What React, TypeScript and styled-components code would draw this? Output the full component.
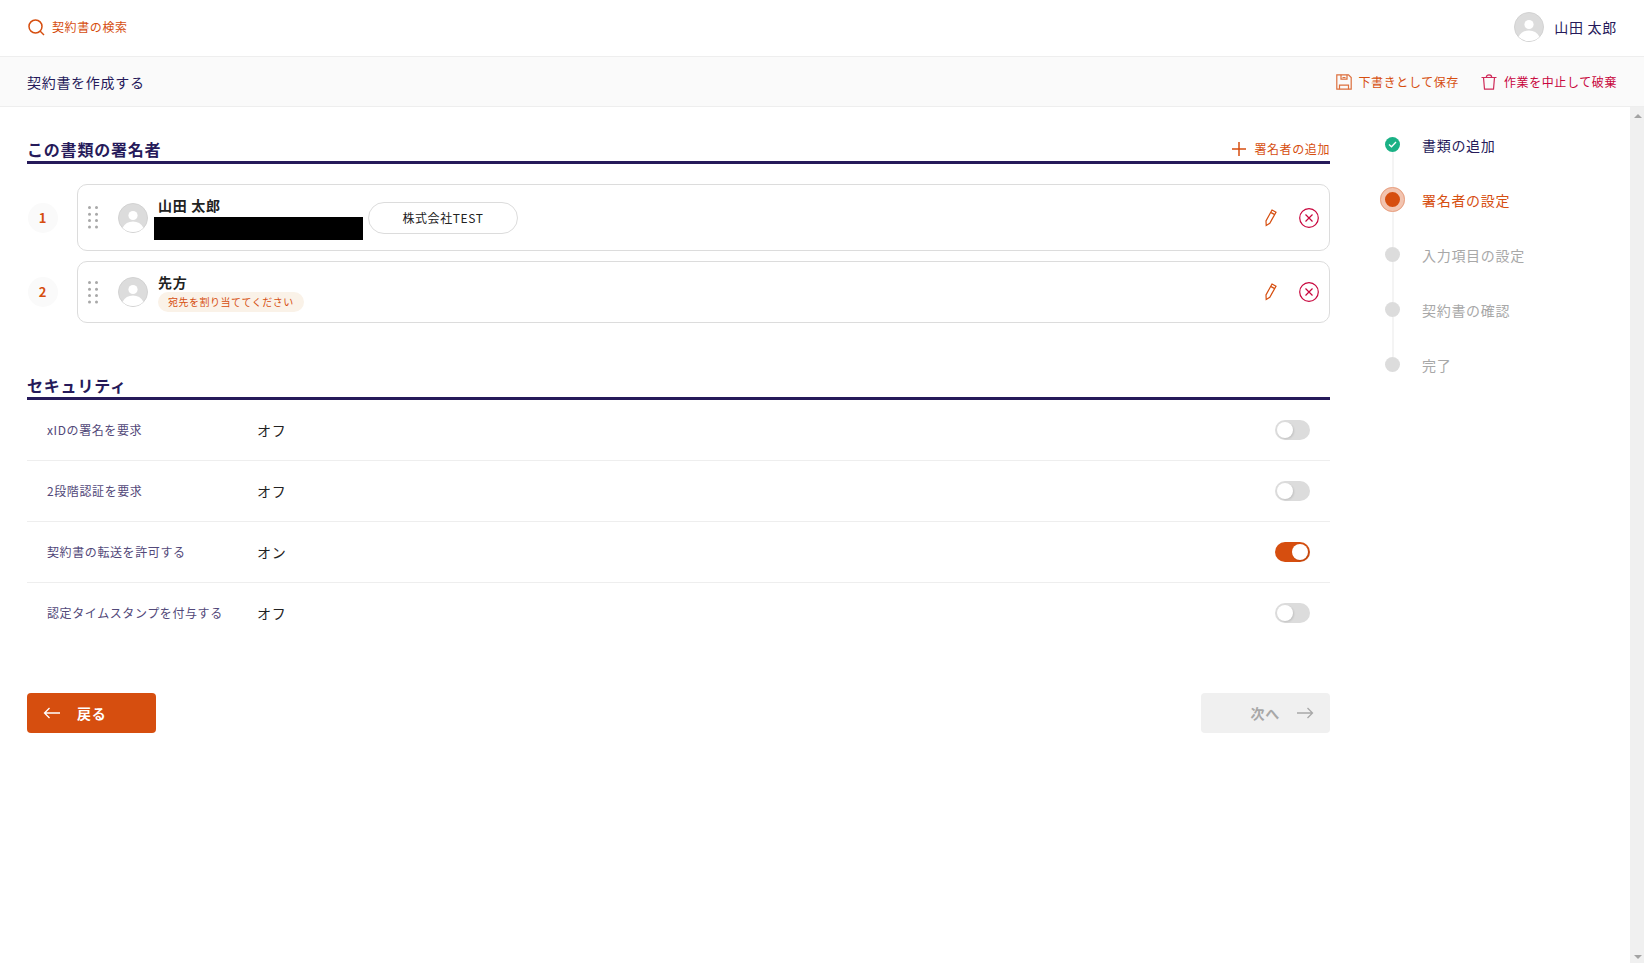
import React, { useState } from "react";
import styled, { createGlobalStyle, css } from "styled-components";

const color = {
  orange: "#d64e0f",
  navy: "#261a5a",
  crimson: "#c8063d",
  ink: "#222222",
  line: "#dcdcdc",
  faint: "#eeeeee",
  muted: "#a8a8a8",
  green: "#1ab185",
};

const GlobalStyle = createGlobalStyle`
  *, *::before, *::after { box-sizing: border-box; letter-spacing: 0.05em; }
  html, body, #root { height: 100%; }
  body {
    margin: 0;
    background: #fff;
    color: ${color.ink};
    font-family: "Noto Sans CJK JP", sans-serif;
    font-size: 14px;
    line-height: 20px;
  }
  button { font: inherit; border: 0; background: none; padding: 0; cursor: pointer; }
  svg { display: block; flex: none; }
`;

const Page = styled.div`
  display: flex;
  flex-direction: column;
  height: 100%;
`;

const TopBar = styled.header`
  display: flex;
  align-items: center;
  justify-content: space-between;
  height: 57px;
  padding: 0 27px 2px;
  border-bottom: 1px solid ${color.faint};
`;

const SearchLink = styled.a`
  display: flex;
  align-items: center;
  gap: 7px;
  color: ${color.orange};
  font-size: 12px;
  text-decoration: none;
`;

const User = styled.div`
  display: flex;
  align-items: center;
  gap: 10px;
  color: ${color.navy};
`;

const TitleBar = styled.div`
  display: flex;
  align-items: center;
  justify-content: space-between;
  height: 50px;
  padding: 0 27px;
  background: #fafafa;
  border-bottom: 1px solid ${color.faint};
`;

const PageTitle = styled.h1`
  margin: 0;
  color: ${color.navy};
  font-size: 14px;
  font-weight: 400;
`;

const Actions = styled.div`
  display: flex;
  gap: 22px;
`;

const TextButton = styled.button<{ $tone?: "orange" | "crimson" }>`
  display: flex;
  align-items: center;
  gap: 7px;
  color: ${(p) => color[p.$tone ?? "orange"]};
  && { font-size: 12px; }
`;

const Body = styled.div`
  display: flex;
  flex: 1;
  min-height: 0;
`;

const Main = styled.main`
  flex: 1;
  min-width: 0;
  padding: 29px 0 0 27px;
`;

const SectionHead = styled.div`
  display: flex;
  align-items: center;
  justify-content: space-between;
  height: 28px;
  border-bottom: 3px solid ${color.navy};
`;

const SectionTitle = styled.h2`
  margin: 0;
  color: ${color.navy};
  font-size: 16px;
  font-weight: 700;
`;

const SignerList = styled.ol`
  display: flex;
  flex-direction: column;
  gap: 10px;
  margin: 20px 0 49px;
  padding: 0;
  list-style: none;
`;

const SignerRow = styled.li`
  display: flex;
  align-items: center;
  gap: 19px;
  padding-left: 1px;
`;

const Order = styled.span`
  display: grid;
  place-items: center;
  width: 30px;
  height: 30px;
  border-radius: 50%;
  background: #fafafa;
  color: ${color.orange};
  font-size: 13px;
  font-weight: 700;
`;

const Card = styled.div<{ $tall?: boolean }>`
  display: flex;
  flex: 1;
  align-items: center;
  min-height: ${(p) => (p.$tall ? 67 : 62)}px;
  padding: 0 10px;
  border: 1px solid ${color.line};
  border-radius: 10px;
`;

const Identity = styled.div`
  display: flex;
  flex-direction: column;
  align-items: flex-start;
  padding-left: 10px;
`;

const Name = styled.strong`
  font-size: 14px;
`;

const Redacted = styled.span`
  width: 209px;
  height: 23px;
  margin: 2px 0 0 -4px;
  background: #000;
`;

const Notice = styled.span`
  padding: 0 10px;
  border-radius: 10px;
  background: #faf2e8;
  color: ${color.orange};
  font-size: 10px;
`;

const Company = styled.span`
  min-width: 150px;
  height: 32px;
  margin-left: 5px;
  border: 1px solid ${color.line};
  border-radius: 16px;
  font-size: 12px;
  line-height: 30px;
  text-align: center;
`;

const CardTools = styled.div`
  display: flex;
  align-items: center;
  gap: 19px;
  margin-left: auto;
`;

const Settings = styled.div`
  margin-bottom: 50px;
`;

const SettingRow = styled.div`
  display: flex;
  align-items: center;
  height: 61px;
  padding: 0 20px;
  border-bottom: 1px solid ${color.faint};
  &:last-child { height: 60px; border-bottom: 0; }
`;

const SettingLabel = styled.label`
  width: 210px;
  color: #524879;
  font-size: 12px;
`;

const SettingValue = styled.span`
  flex: 1;
`;

const Switch = styled.input`
  appearance: none;
  width: 35px;
  height: 20px;
  margin: 0;
  padding: 2px;
  border-radius: 10px;
  background: ${color.line};
  cursor: pointer;
  &::before {
    content: "";
    display: block;
    width: 16px;
    height: 16px;
    border-radius: 50%;
    background: #fff;
    box-shadow: 1px 1px 2px rgba(0, 0, 0, 0.12);
  }
  &:checked { background: ${color.orange}; }
  &:checked::before { margin-left: auto; }
`;

const Footer = styled.div`
  display: flex;
  justify-content: space-between;
`;

const NavButton = styled.button<{ $next?: boolean }>`
  display: flex;
  align-items: center;
  justify-content: ${(p) => (p.$next ? "flex-end" : "flex-start")};
  gap: 16px;
  width: 129px;
  height: 40px;
  border-radius: 4px;
  background: ${color.orange};
  color: #fff;
  && { padding: 0 16px; font-weight: 700; }
  &:disabled {
    background: #f0f0f0;
    color: ${color.muted};
    cursor: default;
  }
`;

const Aside = styled.aside`
  flex: none;
  width: 300px;
  padding: 25px 0 0 50px;
`;

const Steps = styled.ol`
  margin: 0;
  padding: 0;
  list-style: none;
`;

type StepState = "done" | "current" | "todo";

const stepText = { done: color.navy, current: color.orange, todo: color.muted };

const Step = styled.li<{ $state: StepState }>`
  display: flex;
  gap: 17px;
  height: 55px;
  color: ${(p) => stepText[p.$state]};
  line-height: 26px;
`;

const StepTrack = styled.span`
  display: flex;
  flex-direction: column;
  align-items: center;
  width: 25px;
`;

const StepMark = styled.span<{ $state: StepState }>`
  display: grid;
  place-items: center;
  flex: none;
  width: 15px;
  height: 15px;
  margin: 5px 0;
  border-radius: 50%;
  background: ${(p) => (p.$state === "done" ? color.green : color.line)};
  ${(p) =>
    p.$state === "current" &&
    css`
      width: 25px;
      height: 25px;
      margin: 0;
      border: 5px solid #f2c4b0;
      background: ${color.orange};
      outline: 1px solid #e8a284;
      outline-offset: -1px;
    `}
`;

const StepLine = styled.span`
  flex: 1;
  z-index: -1;
  width: 2px;
  margin: -5px 0;
  background: #f4f4f4;
  ${Step}:last-child & { display: none; }
`;

const ScrollRail = styled.div`
  display: flex;
  flex-direction: column;
  justify-content: space-between;
  align-items: flex-end;
  flex: none;
  width: 14px;
  padding: 7px 2px 4px;
  background: #f0f0f0;
`;

const Avatar = () => (
  <svg width="30" height="30" viewBox="0 0 30 30" aria-hidden="true">
    <circle cx="15" cy="15" r="14.5" fill="#dcdcdc" stroke="#d2d2d2" />
    <circle cx="15" cy="12.5" r="4.6" fill="#fff" />
    <path d="M4.6 24.7a11.8 11.8 0 0 1 20.8 0A14.5 14.5 0 0 1 4.6 24.7Z" fill="#fff" />
  </svg>
);

const SearchIcon = () => (
  <svg width="18" height="18" viewBox="0 0 18 18" fill="none" stroke="currentColor" strokeWidth="1.5">
    <circle cx="8.5" cy="8.5" r="6.5" />
    <path d="m13 13 4 4" />
  </svg>
);

const SaveIcon = () => (
  <svg width="16" height="16" viewBox="0 0 16 16" fill="none" stroke="currentColor" strokeWidth="1.2" opacity="0.8">
    <path d="M.8.8h11.700l2.700 2.700v11.700H.8z" />
    <path d="M5 .8v4.400h6V.8M3.500 15.200v-4h9v4M6.500 3.500h3" />
  </svg>
);

const TrashIcon = () => (
  <svg width="16" height="16" viewBox="0 0 16 16" fill="none" stroke="currentColor" strokeWidth="1.2" opacity="0.85">
    <path d="M.5 3.500h15M2.500 3.500l1 11.700h9l1-11.700M5.300 3.500c0-3.600 5.400-3.600 5.400 0" />
  </svg>
);

const PlusIcon = () => (
  <svg width="16" height="16" viewBox="0 0 16 16" fill="none" stroke="currentColor" strokeWidth="1.5">
    <path d="M8 1v14M1 8h14" />
  </svg>
);

const PencilIcon = () => (
  <svg width="18" height="18" viewBox="0 0 18 18" fill="none" stroke={color.orange} strokeWidth="1.2">
    <path d="m10 1 4 2.200-6.200 11L4.200 16.400 4 12zM8.700 3.400l4 2.200" />
  </svg>
);

const RemoveIcon = () => (
  <svg width="20" height="20" viewBox="0 0 20 20" fill="none" stroke={color.crimson} strokeWidth="1.2">
    <circle cx="10" cy="10" r="9.3" />
    <path d="m6.500 6.500 7 7m0-7-7 7" />
  </svg>
);

const CheckIcon = () => (
  <svg width="9" height="9" viewBox="0 0 9 9" fill="none" stroke="#fff" strokeWidth="1.3">
    <path d="m1 4.500 2.500 2.300L8 2" />
  </svg>
);

const Arrow = ({ back }: { back?: boolean }) => (
  <svg width="18" height="12" viewBox="0 0 18 12" fill="none" stroke="currentColor" strokeWidth="1.3">
    {back ? <path d="M17 6H2M6.500 1 1.500 6l5 5" /> : <path d="M1 6h15M11.500 1l5 5-5 5" />}
  </svg>
);

const Caret = ({ up }: { up?: boolean }) => (
  <svg width="8" height="4" viewBox="0 0 8 4" fill="#a3a3a3">
    <path d={up ? "M0 4 4 0l4 4z" : "M0 0h8L4 4z"} />
  </svg>
);

const GripIcon = styled.svg`
  margin-right: 20px;
  cursor: grab;
`;

const GripHandle = () => (
  <GripIcon width="10" height="23" viewBox="0 0 10 23" fill={color.muted} aria-hidden="true">
    {[1.5, 8.2, 14.5, 21].map((y) => (
      <React.Fragment key={y}>
        <circle cx="1.5" cy={y} r="1.5" />
        <circle cx="8.5" cy={y} r="1.5" />
      </React.Fragment>
    ))}
  </GripIcon>
);

const Tools = () => (
  <CardTools>
    <button type="button" aria-label="編集"><PencilIcon /></button>
    <button type="button" aria-label="削除"><RemoveIcon /></button>
  </CardTools>
);

const steps: { label: string; state: StepState }[] = [
  { label: "書類の追加", state: "done" },
  { label: "署名者の設定", state: "current" },
  { label: "入力項目の設定", state: "todo" },
  { label: "契約書の確認", state: "todo" },
  { label: "完了", state: "todo" },
];

const initialSettings = [
  { id: "xid", label: "xIDの署名を要求", on: false },
  { id: "two-step", label: "2段階認証を要求", on: false },
  { id: "forward", label: "契約書の転送を許可する", on: true },
  { id: "timestamp", label: "認定タイムスタンプを付与する", on: false },
];

export default function App() {
  const [settings, setSettings] = useState(initialSettings);
  const toggle = (id: string) =>
    setSettings((all) => all.map((s) => (s.id === id ? { ...s, on: !s.on } : s)));

  return (
    <Page>
      <GlobalStyle />
      <TopBar>
        <SearchLink href="#search"><SearchIcon />契約書の検索</SearchLink>
        <User><Avatar />山田 太郎</User>
      </TopBar>
      <TitleBar>
        <PageTitle>契約書を作成する</PageTitle>
        <Actions>
          <TextButton type="button"><SaveIcon />下書きとして保存</TextButton>
          <TextButton type="button" $tone="crimson"><TrashIcon />作業を中止して破棄</TextButton>
        </Actions>
      </TitleBar>
      <Body>
        <Main>
          <SectionHead>
            <SectionTitle>この書類の署名者</SectionTitle>
            <TextButton type="button"><PlusIcon />署名者の追加</TextButton>
          </SectionHead>
          <SignerList>
            <SignerRow>
              <Order>1</Order>
              <Card $tall>
                <GripHandle />
                <Avatar />
                <Identity>
                  <Name>山田 太郎</Name>
                  <Redacted />
                </Identity>
                <Company>株式会社TEST</Company>
                <Tools />
              </Card>
            </SignerRow>
            <SignerRow>
              <Order>2</Order>
              <Card>
                <GripHandle />
                <Avatar />
                <Identity>
                  <Name>先方</Name>
                  <Notice>宛先を割り当ててください</Notice>
                </Identity>
                <Tools />
              </Card>
            </SignerRow>
          </SignerList>
          <SectionHead>
            <SectionTitle>セキュリティ</SectionTitle>
          </SectionHead>
          <Settings>
            {settings.map((s) => (
              <SettingRow key={s.id}>
                <SettingLabel htmlFor={s.id}>{s.label}</SettingLabel>
                <SettingValue>{s.on ? "オン" : "オフ"}</SettingValue>
                <Switch id={s.id} type="checkbox" role="switch" checked={s.on} onChange={() => toggle(s.id)} />
              </SettingRow>
            ))}
          </Settings>
          <Footer>
            <NavButton type="button"><Arrow back />戻る</NavButton>
            <NavButton type="button" $next disabled>次へ<Arrow /></NavButton>
          </Footer>
        </Main>
        <Aside>
          <Steps>
            {steps.map((s) => (
              <Step key={s.label} $state={s.state}>
                <StepTrack>
                  <StepMark $state={s.state}>{s.state === "done" && <CheckIcon />}</StepMark>
                  <StepLine />
                </StepTrack>
                {s.label}
              </Step>
            ))}
          </Steps>
        </Aside>
        <ScrollRail aria-hidden="true">
          <Caret up />
          <Caret />
        </ScrollRail>
      </Body>
    </Page>
  );
}
